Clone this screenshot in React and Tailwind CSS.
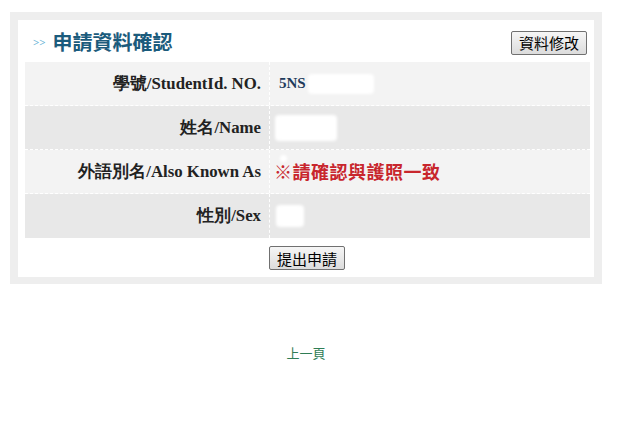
import React from 'react';

const rows = [
  { label: '學號/StudentId. NO.', bg: 'bg-[#f3f3f3]', kind: 'id' },
  { label: '姓名/Name', bg: 'bg-[#e8e8e8]', kind: 'name' },
  { label: '外語別名/Also Known As', bg: 'bg-[#f3f3f3]', kind: 'alias' },
  { label: '性別/Sex', bg: 'bg-[#e8e8e8]', kind: 'sex' },
];

const Redacted = ({ className }) => (
  <span className={`inline-block bg-white rounded-sm blur-[1.5px] ${className}`} />
);

const Value = ({ kind }) => {
  if (kind === 'id') {
    return (
      <div className="flex items-center">
        <span className="text-[15px] font-bold text-[#1f3b5c] [font-family:'Liberation_Serif',serif]">5NS</span>
        <Redacted className="w-[66px] h-[20px] ml-[2px]" />
      </div>
    );
  }
  if (kind === 'name') return <Redacted className="w-[62px] h-[26px] -ml-[4px]" />;
  if (kind === 'sex') return <Redacted className="w-[28px] h-[22px] -ml-[3px]" />;
  return (
    <div className="relative flex items-center">
      <Redacted className="absolute left-[1px] -top-[3px] w-[7px] h-[7px]" />
      <span className="text-[18px] font-bold text-[#c8262d] tracking-[0.5px] [font-family:'Noto_Sans_CJK_TC',sans-serif] -ml-[5px]">
        ※請確認與護照一致
      </span>
    </div>
  );
};

const GrayButton = ({ children, className }) => (
  <button
    className={`h-[24px] px-[6px] border border-[#707070] rounded-[2px] bg-gradient-to-b from-[#f6f6f6] to-[#dcdcdc] text-[15px] leading-none text-black [font-family:'Noto_Sans_CJK_TC',sans-serif] ${className}`}
  >
    {children}
  </button>
);

export default function App() {
  return (
    <div className="w-[637px] h-[422px] bg-white pt-[12px] pl-[10px] [font-family:'Liberation_Serif',serif]">
      <div className="w-[592px] bg-[#eeeeee] p-[8px] pb-[7px]">
        <div className="bg-white pl-[7px] pr-[4px]">
          <div className="h-[42px] flex items-center justify-between">
            <div className="flex items-center pl-[8px] pt-[2px]">
              <span className="text-[11px] text-[#6bb3d6] font-bold mr-[7px] leading-none">&gt;&gt;</span>
              <span className="text-[20px] font-bold text-[#1b5b7c] [font-family:'Noto_Sans_CJK_TC',sans-serif] leading-none">
                申請資料確認
              </span>
            </div>
            <GrayButton className="w-[76px] mr-[3px] mt-[3px]">資料修改</GrayButton>
          </div>
          <div className="flex flex-col">
            {rows.map((r, i) => (
              <div
                key={r.label}
                className={`flex h-[44px] ${r.bg} ${i < rows.length - 1 ? 'border-b border-dashed border-white' : ''}`}
              >
                <div className="w-[245px] flex items-center justify-end pr-[8px] border-r border-dashed border-white text-[16.8px] font-bold text-[#222]">
                  {r.label}
                </div>
                <div className="flex-1 flex items-center pl-[9px]">
                  <Value kind={r.kind} />
                </div>
              </div>
            ))}
          </div>
          <div className="h-[39px] flex items-center pl-[244px] pt-[1px]">
            <GrayButton className="w-[76px]">提出申請</GrayButton>
          </div>
        </div>
      </div>
      <div className="w-[592px] mt-[59px] flex justify-center">
        <a className="text-[13px] text-[#2f7d55] [font-family:'Noto_Sans_CJK_TC',sans-serif]">上一頁</a>
      </div>
    </div>
  );
}
